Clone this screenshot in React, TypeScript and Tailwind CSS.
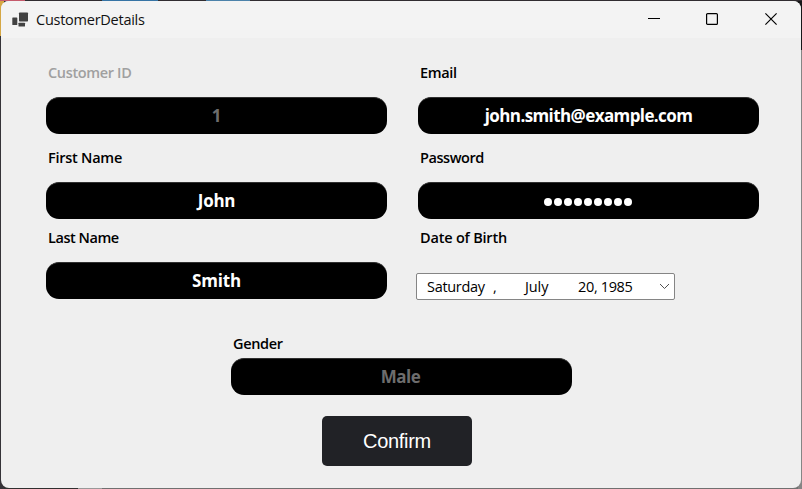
import type { ReactNode } from 'react';

type LabelProps = { children: ReactNode; className?: string };

function Label({ children, className = 'text-black' }: LabelProps) {
  return (
    <label className={`ml-[2px] block h-5 w-max whitespace-nowrap text-[14.5px] leading-5 font-semibold ${className}`}>
      {children}
    </label>
  );
}

function Field({ children, className = 'text-white' }: LabelProps) {
  return (
    <div className={`flex h-[37px] w-[341px] items-center justify-center rounded-[13px] border-t border-[#303030] bg-black text-[17px] leading-6 font-bold whitespace-nowrap ${className}`}>
      {children}
    </div>
  );
}

function TitleBar() {
  return (
    <header className="flex h-[37px] shrink-0 items-center bg-[#f3f3f3] pl-[11px]">
      <svg width="17" height="16" viewBox="0 0 17 16" className="mr-[7px] shrink-0" fill="#424242">
        <rect x="7" y="0.5" width="9" height="9" rx="0.7" />
        <rect x="0.3" y="5.5" width="5" height="7.5" rx="0.6" />
        <rect x="6.5" y="10.7" width="6.5" height="3.8" rx="0.6" />
      </svg>
      <h1 className="text-[14.5px] leading-5 tracking-[-0.25px] text-[#111]">CustomerDetails</h1>
      <div className="mr-[24px] ml-auto flex items-center gap-[47px] pb-px text-black">
        <svg width="12" height="12" viewBox="0 0 12 12" className="overflow-visible"><path d="M1 5.5h12" stroke="currentColor" /></svg>
        <svg width="12" height="12" viewBox="0 0 12 12"><rect x="0.6" y="0.6" width="10.8" height="10.8" rx="1" fill="none" stroke="currentColor" strokeWidth="1.2" /></svg>
        <svg width="12" height="12" viewBox="0 0 12 12"><path d="m.4.4 11.2 11.2m0-11.2L.4 11.6" stroke="currentColor" strokeWidth="1.15" /></svg>
      </div>
    </header>
  );
}

export default function App() {
  return (
    <div className="flex h-[489px] w-[802px] flex-col overflow-hidden bg-[#303030] bg-[linear-gradient(90deg,#c55b6c_0_25px,#302c30_25px_102px,#3674a5_102px_158px,#302c30_158px_206px,#4c82aa_206px_250px,#302c30_250px),linear-gradient(#d5a744_0_36px,#353338_36px),linear-gradient(#171719_0_50px,#858585_50px),linear-gradient(90deg,#303030_0_78px,#999_78px_102px,#707070_102px)] bg-[length:100%_1px,4px_100%,4px_100%,100%_4px] bg-[position:0_0,0_0,100%_0,0_100%] bg-no-repeat p-px font-['Open_Sans','Noto_Sans',sans-serif]">
      <div className="flex flex-1 flex-col overflow-hidden rounded-lg bg-[#efefef]">
        <TitleBar />
        <main className="flex flex-col pt-[25px] pl-[45px]">
          <div className="flex gap-[31px]">
            <section className="flex w-[341px] flex-col">
              <Label className="tracking-[-0.35px] text-[#a0a0a0]">Customer ID</Label>
              <div className="mt-[14px]"><Field className="text-[#6d6d6d]">1</Field></div>
              <div className="mt-[14px]"><Label className="tracking-[-0.25px] text-black">First Name</Label></div>
              <div className="mt-[14px]"><Field className="tracking-[-0.25px] text-white">John</Field></div>
              <div className="mt-[9px]"><Label className="tracking-[-0.45px] text-black">Last Name</Label></div>
              <div className="mt-[14px]"><Field className="tracking-[-0.2px] text-white">Smith</Field></div>
            </section>
            <section className="flex w-[341px] flex-col">
              <Label className="tracking-[-0.35px] text-black">Email</Label>
              <div className="mt-[14px]"><Field className="tracking-[-0.6px] text-white">john.smith@example.com</Field></div>
              <div className="mt-[14px]"><Label className="tracking-[-0.45px] text-black">Password</Label></div>
              <div className="mt-[14px]">
                <Field>
                  <span className="flex gap-[2px] pt-px pr-[2px]" aria-label="Password entered">
                    {Array.from({ length: 9 }, (_, i) => <i key={i} className="size-2 rounded-full bg-white" />)}
                  </span>
                </Field>
              </div>
              <div className="mt-[9px]"><Label className="tracking-[-0.2px] text-black">Date of Birth</Label></div>
              <div className="mt-[25px] -ml-[2px] flex h-[27px] w-[259px] items-center rounded-[2px] border border-[#858585] bg-white pl-[10px] text-[14.5px] leading-5 text-black">
                <span className="w-[66px] tracking-[-0.3px]">Saturday</span>
                <span className="w-[32px]">,</span>
                <span className="w-[53px] tracking-[-0.1px]">July</span>
                <span className="whitespace-nowrap tracking-[-0.35px]">20, 1985</span>
                <svg width="11" height="7" viewBox="0 0 11 7" fill="none" className="mr-[4px] ml-auto"><path d="m1 1 4.5 4.5L10 1" stroke="#505050" /></svg>
              </div>
            </section>
          </div>
          <section className="mt-[34px] ml-[185px] w-[341px]">
            <Label className="tracking-[-0.35px] text-black">Gender</Label>
            <div className="mt-[4px]"><Field className="pr-[2px] tracking-[-0.45px] text-[#6d6d6d]">Male</Field></div>
            <button className="mt-[21px] ml-[91px] flex h-[50px] w-[150px] items-center justify-center rounded-[5px] bg-[#212226] font-['Liberation_Sans',Arial,sans-serif] text-[20px] tracking-[-0.3px] text-white">Confirm</button>
          </section>
        </main>
      </div>
    </div>
  );
}
